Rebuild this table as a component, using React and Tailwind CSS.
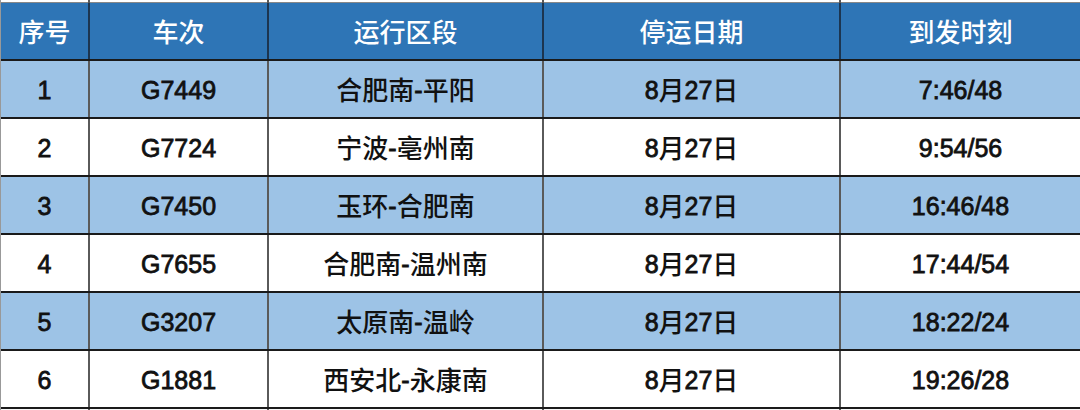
const cols = 'grid grid-cols-[89px_179px_275px_297px_240px]';

const headers = ['序号', '车次', '运行区段', '停运日期', '到发时刻'];

const rows = [
  ['1', 'G7449', '合肥南-平阳', '8月27日', '7:46/48'],
  ['2', 'G7724', '宁波-亳州南', '8月27日', '9:54/56'],
  ['3', 'G7450', '玉环-合肥南', '8月27日', '16:46/48'],
  ['4', 'G7655', '合肥南-温州南', '8月27日', '17:44/54'],
  ['5', 'G3207', '太原南-温岭', '8月27日', '18:22/24'],
  ['6', 'G1881', '西安北-永康南', '8月27日', '19:26/28'],
];

// Chinese runs are set a little larger than the Latin digits
function Mixed({ text }) {
  return text.split(/([\u4e00-\u9fff]+)/).map((part, i) =>
    /[\u4e00-\u9fff]/.test(part) ? (
      <span key={i} className="text-[26px] font-medium">
        {part}
      </span>
    ) : (
      <span key={i} className="[-webkit-text-stroke:0.8px_currentColor]">
        {part}
      </span>
    )
  );
}

function Cell({ children, last, dark }) {
  return (
    <div
      className={`flex items-center justify-center pt-[3px] leading-none ${
        last ? 'border-r border-r-[#333]' : dark ? 'border-r-2 border-r-[#1c3550]' : 'border-r-2 border-r-[#5a5a5a]'
      }`}
    >
      {children}
    </div>
  );
}

export default function App() {
  return (
    <div
      className="w-[1080px] h-[410px] overflow-hidden bg-white border-l border-l-[#999]"
      style={{ fontFamily: '"Liberation Sans", "Noto Sans CJK SC", sans-serif' }}
    >
      {/* tail of previous row */}
      <div className={`${cols} h-[3px] border-b border-b-[#888]`}>
        {headers.map((h, i) => (
          <Cell key={h} last={i === headers.length - 1} />
        ))}
      </div>

      {/* header */}
      <div className={`${cols} h-[58px] bg-[#2e75b6] border-b-2 border-b-[#1a1a1a] text-white text-[25px]`}>
        {headers.map((h, i) => (
          <Cell key={h} dark last={i === headers.length - 1}>
            <Mixed text={h} />
          </Cell>
        ))}
      </div>

      {rows.map((r, idx) => (
        <div
          key={r[0]}
          className={`${cols} h-[58px] border-b-2 border-b-[#1a1a1a] text-[#111] text-[25px] ${
            idx % 2 === 0 ? 'bg-[#9dc3e6]' : 'bg-white'
          }`}
        >
          {r.map((v, i) => (
            <Cell key={i} last={i === r.length - 1}>
              <Mixed text={v} />
            </Cell>
          ))}
        </div>
      ))}

      {/* start of next row */}
      <div className={`${cols} h-[20px] bg-[#f7f7f7]`}>
        {headers.map((h, i) => (
          <Cell key={h} last={i === headers.length - 1} />
        ))}
      </div>
    </div>
  );
}
